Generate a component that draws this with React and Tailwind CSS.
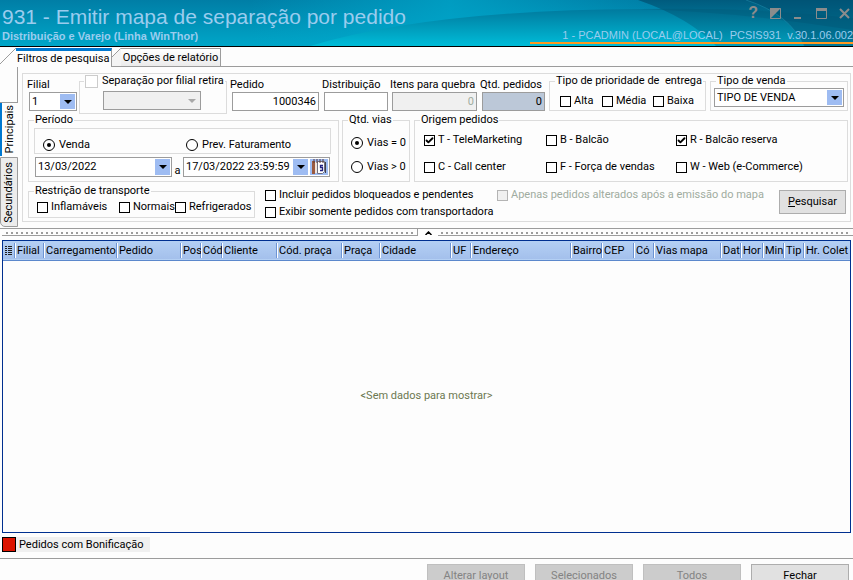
import React from "react";
import { Check } from "lucide-react";

const columns = [
  { label: "Filial", width: "w-[29px]" },
  { label: "Carregamento", width: "w-[73px]" },
  { label: "Pedido", width: "w-[64px]" },
  { label: "Pos", width: "w-[20px]" },
  { label: "Cód", width: "w-[21px]" },
  { label: "Cliente", width: "w-[55px]" },
  { label: "Cód. praça", width: "w-[65px]" },
  { label: "Praça", width: "w-[38px]" },
  { label: "Cidade", width: "w-[71px]" },
  { label: "UF", width: "w-[20px]" },
  { label: "Endereço", width: "w-[100px]" },
  { label: "Bairro", width: "w-[31px]" },
  { label: "CEP", width: "w-[32px]" },
  { label: "Có", width: "w-[20px]" },
  { label: "Vias mapa", width: "w-[67px]" },
  { label: "Dat", width: "w-[20px]" },
  { label: "Hor", width: "w-[22px]" },
  { label: "Min", width: "w-[21px]" },
  { label: "Tip", width: "w-[20px]" },
  { label: "Hr. Colet", width: "" },
];

function Checkbox({ label, className = "", defaultChecked, disabled }) {
  return (
    <label className={`flex items-center gap-[3px] whitespace-nowrap ${disabled ? "text-[#a0aca0]" : ""} ${className}`}>
      <span className="grid shrink-0 place-items-center">
        <input
          type="checkbox"
          defaultChecked={defaultChecked}
          disabled={disabled}
          className="peer [grid-area:1/1] size-[11px] appearance-none border border-black bg-white disabled:border-[#b4b4b4] disabled:bg-[#f0f0f0]"
        />
        <Check size={9} strokeWidth={5} className="pointer-events-none invisible [grid-area:1/1] peer-checked:visible" />
      </span>
      {label}
    </label>
  );
}

function Radio({ label, name, className = "", defaultChecked }) {
  return (
    <label className={`flex items-center gap-1 whitespace-nowrap ${className}`}>
      <span className="grid shrink-0 place-items-center">
        <input
          type="radio"
          name={name}
          defaultChecked={defaultChecked}
          className="peer [grid-area:1/1] size-3 appearance-none rounded-full border border-black bg-white"
        />
        <span className="pointer-events-none invisible [grid-area:1/1] size-1 rounded-full bg-black peer-checked:visible" />
      </span>
      {label}
    </label>
  );
}

function Group({ title, className = "", children }) {
  return (
    <fieldset className={`min-w-0 border border-[#dcdcdc] ${className}`}>
      <legend className="ml-[5px] whitespace-nowrap px-px">{title}</legend>
      {children}
    </fieldset>
  );
}

function Arrow({ className = "" }) {
  return (
    <svg viewBox="0 0 8 4" className={`h-1 w-2 ${className}`} fill="currentColor">
      <path d="M0 0h8L4 4z" />
    </svg>
  );
}

function Select({ label, options, className = "", disabled }) {
  return (
    <span
      className={`grid h-[19px] grid-cols-1 items-center border border-[#9c9c9c] ${
        disabled ? "bg-[#f0f0f0]" : "bg-white"
      } ${className}`}
    >
      <select
        aria-label={label}
        disabled={disabled}
        className="[grid-area:1/1] h-full w-full appearance-none pl-[2px] outline-none"
      >
        {options.map((o) => (
          <option key={o}>{o}</option>
        ))}
      </select>
      <span
        className={`pointer-events-none mr-px flex h-[15px] w-[15px] items-center justify-center justify-self-end [grid-area:1/1] ${
          disabled ? "text-[#a8a8a8]" : "bg-[#9ebcf2]"
        }`}
      >
        <Arrow />
      </span>
    </span>
  );
}

function Field({ label, value = "", className = "", inputClass = "bg-white", disabled, readOnly }) {
  return (
    <label className={`block shrink-0 whitespace-nowrap ${className}`}>
      <span className="block">{label}</span>
      <input
        type="text"
        defaultValue={value}
        disabled={disabled}
        readOnly={readOnly}
        className={`ml-[2px] block h-[19px] w-full border border-[#9c9c9c] px-[2px] text-right outline-none ${inputClass}`}
      />
    </label>
  );
}

function DateField({ label, value, className = "", calendar }) {
  return (
    <span className={`flex items-center gap-[2px] border border-[#9c9c9c] bg-white pr-px ${className}`}>
      <input type="text" aria-label={label} defaultValue={value} className="w-0 flex-1 pl-[2px] outline-none" />
      <button type="button" aria-label={`Abrir ${label}`} className="flex h-4 w-[15px] items-center justify-center bg-[#9ebcf2]">
        <Arrow />
      </button>
      {calendar && (
        <button type="button" aria-label="Calendário" className="flex h-4 w-[18px] items-center justify-center bg-[#9ebcf2]">
          <svg viewBox="0 0 16 16" className="size-4">
            <path d="M1 2h3v13H1z" fill="#9a5a40" />
            <path d="M4 3h2v11H4z" fill="#f0e4dc" />
            <path d="M6.500 2.500h7v10l-2 2h-5z" fill="#fff" stroke="#707080" />
            <path d="M14.500 3v11" stroke="#404048" />
            <path d="M3 0v4M6 0v4M9 0v4M12 0v4" stroke="#583838" />
            <path d="M12 6.500H9.500v2h2v3H9" fill="none" stroke="#202080" strokeWidth="1.300" />
          </svg>
        </button>
      )}
    </span>
  );
}

function Banner() {
  return (
    <header className="relative flex h-[47px] shrink-0 justify-between overflow-hidden border-b border-black bg-[#0098b8] font-['Liberation_Sans',sans-serif] text-[#9accee]">
      <svg className="absolute inset-0 h-full w-full" viewBox="0 0 853 46" preserveAspectRatio="none">
        <defs>
          <linearGradient id="base" x1="0" y1="0" x2="0" y2="1">
            <stop offset="0" stopColor="#007ea6" />
            <stop offset="1" stopColor="#00a6c8" />
          </linearGradient>
          <linearGradient id="glow" x1="0" y1="0" x2="1" y2="0">
            <stop offset="0" stopColor="#00a8cc" stopOpacity="0" />
            <stop offset=".5" stopColor="#00a8cc" stopOpacity=".7" />
            <stop offset="1" stopColor="#00a8cc" stopOpacity="0" />
          </linearGradient>
          <linearGradient id="wave" x1="0" y1="0" x2="0" y2="1">
            <stop offset="0" stopColor="#007a9e" />
            <stop offset="1" stopColor="#00bcd8" />
          </linearGradient>
          <linearGradient id="dark" x1="0" y1="0" x2="0" y2="1">
            <stop offset="0" stopColor="#005274" />
            <stop offset="1" stopColor="#0098b6" />
          </linearGradient>
        </defs>
        <path d="M0 0h853v46H0z" fill="url(#base)" />
        <path d="M250 0h400v46H250z" fill="url(#glow)" />
        <path d="M310 46Q430 10 640 9T853 18V46z" fill="url(#wave)" />
        <path d="M638 0Q690 18 716 46H853V0z" fill="url(#dark)" opacity=".8" />
        <path d="M640 9Q750 7 853 18V30Q740 12 640 9z" fill="#005878" opacity=".35" />
        <path d="M746 0Q790 14 804 46H853V0z" fill="#004c6c" opacity=".45" />
        <path d="M746 0Q790 14 804 46" fill="none" stroke="#2090b0" opacity=".5" />
      </svg>
      <div className="relative pl-[2px] pt-1">
        <h1 className="text-[21px] leading-[26px]">931 - Emitir mapa de separação por pedido</h1>
        <p className="text-[11px] font-bold leading-3">Distribuição e Varejo (Linha WinThor)</p>
      </div>
      <div className="relative flex flex-col items-end">
        <div className="flex h-[29px] items-center gap-3 pb-[3px] pr-[3px] text-[#8c8c8c]">
          <button type="button" aria-label="Ajuda" className="text-[16px] font-bold leading-4">?</button>
          <button type="button" aria-label="Aparência">
            <svg viewBox="0 0 11 11" className="size-[11px]"><path d="M0.500 0.500h10v10h-10z" fill="none" stroke="currentColor" /><path d="M0 0h11L0 11z" fill="currentColor" /></svg>
          </button>
          <button type="button" aria-label="Minimizar">
            <svg viewBox="0 0 11 11" className="size-[11px]"><path d="M1 9h7v2H1z" fill="currentColor" /></svg>
          </button>
          <button type="button" aria-label="Maximizar">
            <svg viewBox="0 0 11 11" className="size-[11px]"><path d="M0.500 0.500h10v10h-10z" fill="none" stroke="currentColor" /><path d="M0 0h11v3H0z" fill="currentColor" /></svg>
          </button>
          <button type="button" aria-label="Fechar janela">
            <svg viewBox="0 0 11 11" className="size-[11px]"><path d="M1 1l9 9M10 1l-9 9" stroke="currentColor" strokeWidth="2" /></svg>
          </button>
        </div>
        <p className="flex w-[323px] justify-end gap-[7px] border-b-2 border-[#ff9820] text-[11px] leading-[13px]">
          <span>1 - PCADMIN (LOCAL@LOCAL)</span>
          <span>PCSIS931&nbsp; v.30.1.06.002</span>
        </p>
      </div>
    </header>
  );
}

function Tabs() {
  return (
    <nav className="flex h-5 shrink-0">
      <svg className="h-5 w-4" viewBox="0 0 16 20" fill="none" stroke="#9c9c9c"><path d="M0 17L16 1" /></svg>
      <button type="button" className="mt-px w-24 border-r border-t-[3px] border-r-[#9c9c9c] border-t-[#0078d0] pl-px text-left leading-4">
        Filtros de pesquisa
      </button>
      <svg className="h-5 w-[9px]" viewBox="0 0 9 20" fill="none" stroke="#9c9c9c">
        <path d="M0 10L9 1V20H0z" fill="#f4f4f4" stroke="none" />
        <path d="M0 10L8.500 1.500H9M0 19.500h9" />
      </svg>
      <button
        type="button"
        className="mt-px w-[100px] border-b border-r border-t border-[#9c9c9c] bg-gradient-to-b from-white to-[#ebebeb] pt-px leading-4"
      >
        Opções de relatório
      </button>
      <span className="flex-1 self-stretch border-b border-[#9c9c9c]" />
    </nav>
  );
}

function SideTabs() {
  return (
    <div className="flex w-[18px] shrink-0 flex-col">
      <span className="h-[36px] border-b border-r border-[#9c9c9c]" />
      <button type="button" className="flex h-[53px] items-center justify-center border-l-2 border-[#0078d0]">
        <span className="rotate-180 [writing-mode:vertical-rl]">Principais</span>
      </button>
      <button
        type="button"
        className="mt-px flex h-[70px] items-center justify-center rounded-bl-[5px] border border-[#9c9c9c] bg-[#ececec]"
      >
        <span className="rotate-180 [writing-mode:vertical-rl]">Secundários</span>
      </button>
    </div>
  );
}

function Filters() {
  return (
    <form className="ml-1 mr-[2px] mt-[6px] flex h-[149px] min-w-0 flex-1 flex-col border border-[#dcdcdc] pr-[2px]">
      <div className="flex h-[39px] items-start">
        <label className="ml-1 mt-1 block w-[52px] shrink-0">
          <span className="block">Filial</span>
          <Select label="Filial" options={["1"]} className="ml-[2px] w-[48px]" />
        </label>
        <Group
          title={
            <label className="flex items-center gap-1">
              <input type="checkbox" className="size-[13px] appearance-none border border-[#cccccc] bg-white" />
              Separação por filial retira
            </label>
          }
          className="h-10 w-[148px] shrink-0 [&>legend]:ml-1"
        >
          <Select label="Filial retira" options={[""]} className="ml-[23px] mt-[3px] w-[98px]" disabled />
        </Group>
        <div className="ml-[3px] mt-1 flex shrink-0 gap-1">
          <Field label="Pedido" value="1000346" className="w-[87px]" />
          <Field label="Distribuição" className="ml-px w-16" />
          <Field label="Itens para quebra" value="0" className="w-[85px]" inputClass="bg-[#f0f0f0] text-[#a0aca0]" disabled />
          <Field label="Qtd. pedidos" value="0" className="ml-px w-[63px]" inputClass="bg-[#bcc8d8]" readOnly />
        </div>
        <Group title="Tipo de prioridade de &nbsp;entrega" className="ml-[6px] h-[37px] w-[157px] shrink-0">
          <div className="mt-[6px] flex gap-2 pl-[10px]">
            <Checkbox label="Alta" className="w-[34px]" />
            <Checkbox label="Média" className="w-[43px]" />
            <Checkbox label="Baixa" />
          </div>
        </Group>
        <Group title="Tipo de venda" className="ml-1 h-[37px] flex-1">
          <Select label="Tipo de venda" options={["TIPO DE VENDA"]} className="ml-[3px] mr-[3px]" />
        </Group>
      </div>

      <div className="ml-[5px] flex h-[69px] gap-[3px]">
        <Group title="Período" className="w-[311px] shrink-0">
          <div className="ml-[5px] mr-[7px] mt-px flex h-[26px] items-end border border-[#dcdcdc] pb-px pl-2">
            <Radio name="periodo" label="Venda" className="w-[143px]" defaultChecked />
            <Radio name="periodo" label="Prev. Faturamento" />
          </div>
          <div className="ml-[6px] mr-2 mt-[3px] flex items-start">
            <DateField label="data inicial" value="13/03/2022" className="h-5 w-[137px]" />
            <span className="w-[11px] self-end text-center leading-3">a</span>
            <DateField label="data final" value="17/03/2022 23:59:59" className="h-5 flex-1" calendar />
          </div>
        </Group>
        <Group title="Qtd. vias" className="w-[68px] shrink-0">
          <div className="mt-[9px] flex flex-col gap-[10px] pl-2">
            <Radio name="vias" label="Vias = 0" defaultChecked />
            <Radio name="vias" label="Vias > 0" />
          </div>
        </Group>
        <Group title="Origem pedidos" className="ml-px flex-1">
          <div className="mt-[6px] grid grid-cols-[122px_130px_auto] gap-y-[13px] pl-[9px]">
            <Checkbox label="T - TeleMarketing" defaultChecked />
            <Checkbox label="B - Balcão" />
            <Checkbox label="R - Balcão reserva" defaultChecked />
            <Checkbox label="C - Call center" />
            <Checkbox label="F - Força de vendas" />
            <Checkbox label="W - Web (e-Commerce)" />
          </div>
        </Group>
      </div>

      <div className="ml-[5px] mt-[2px] flex">
        <Group title="Restrição de transporte" className="h-[34px] w-[227px] shrink-0">
          <div className="mt-[2px] flex pl-2">
            <Checkbox label="Inflamáveis" className="w-[82px]" />
            <Checkbox label="Normais" className="w-14" />
            <Checkbox label="Refrigerados" />
          </div>
        </Group>
        <div className="ml-[10px] mt-1 flex flex-col gap-[3px]">
          <Checkbox label="Incluir pedidos bloqueados e pendentes" className="w-[232px]" />
          <Checkbox label="Exibir somente pedidos com transportadora" />
        </div>
        <Checkbox label="Apenas pedidos alterados após a emissão do mapa" className="mt-1 self-start" disabled />
        <button type="submit" className="ml-auto mr-[2px] mt-[6px] h-6 w-[67px] shrink-0 self-start border border-[#adadad] bg-[#e1e1e1]">
          <u>P</u>esquisar
        </button>
      </div>
    </form>
  );
}

function Splitter() {
  return (
    <div className="flex h-2 shrink-0 items-center border-t border-[#9c9c9c]">
      <span className="ml-[2px] h-[7px] flex-1 border-b border-r border-[#9c9c9c] pt-[3px]">
        <span className="ml-1 mr-[3px] block h-[2px] bg-[repeating-linear-gradient(90deg,#9c9c9c_0_2px,transparent_2px_5px)]" />
      </span>
      <button type="button" aria-label="Recolher filtros" className="flex w-5 justify-center">
        <svg viewBox="0 0 7 4" className="h-1 w-[7px]" fill="none" stroke="#000" strokeWidth="1.500"><path d="M0.500 4L3.500 1l3 3" /></svg>
      </button>
      <span className="h-[7px] flex-1 border-b border-[#9c9c9c] pt-[3px]">
        <span className="ml-[3px] mr-1 block h-[2px] bg-[repeating-linear-gradient(90deg,#9c9c9c_0_2px,transparent_2px_5px)]" />
      </span>
    </div>
  );
}

function Grid() {
  return (
    <section className="mx-[2px] mt-1 flex min-h-0 flex-1 flex-col border border-[#003090]">
      <table className="w-full table-fixed border-collapse">
        <thead>
          <tr className="h-[19px] border-b border-[#5c88cc] bg-gradient-to-b from-[#b4d0f4] to-[#a4c0ec]">
            <th className="w-[12px] p-0">
              <svg viewBox="0 0 8 9" className="ml-[2px] h-[9px] w-2" stroke="#202020">
                <path d="M0 .5h2M3 .5h4M0 2.500h2M3 2.500h4M0 4.500h2M3 4.500h4M0 6.500h2M3 6.500h4M0 8.500h2M3 8.500h4" />
              </svg>
            </th>
            {columns.map((c, i) => (
              <th key={i} className={`p-0 font-normal ${c.width}`}>
                <span className="block overflow-hidden whitespace-nowrap border-l border-white pl-px text-left leading-[15px] shadow-[-1px_0_0_#6c94d4]">
                  {c.label}
                </span>
              </th>
            ))}
          </tr>
        </thead>
      </table>
      <p className="flex flex-1 items-center justify-center text-[#6c7850]">&lt;Sem dados para mostrar&gt;</p>
    </section>
  );
}

const footerButtons = ["Alterar layout", "Selecionados", "Todos"];

export default function App() {
  return (
    <div className="flex h-screen flex-col overflow-hidden bg-[#fdfdfd] font-['Roboto',sans-serif] text-[11px] leading-[14px] text-black">
      <Banner />
      <Tabs />
      <main className="flex h-[161px] shrink-0">
        <SideTabs />
        <Filters />
      </main>
      <Splitter />
      <Grid />
      <div className="ml-[2px] mt-1 flex h-[15px] w-[148px] shrink-0 items-center gap-[3px] bg-[#f0f0f0]">
        <span className="h-full w-[14px] border border-black bg-[#dc1400]" />
        Pedidos com Bonificação
      </div>
      <footer className="mt-[6px] flex h-[22px] shrink-0 items-start justify-end gap-[10px] overflow-hidden border-t border-[#9c9c9c] pr-1 pt-[5px]">
        {footerButtons.map((b) => (
          <button key={b} type="button" disabled className="h-6 w-[98px] shrink-0 border border-[#bfbfbf] bg-[#cccccc] text-[#838383]">
            {b}
          </button>
        ))}
        <button type="button" className="h-6 w-[98px] shrink-0 border border-[#adadad] bg-[#e1e1e1]">
          Fechar
        </button>
      </footer>
    </div>
  );
}
